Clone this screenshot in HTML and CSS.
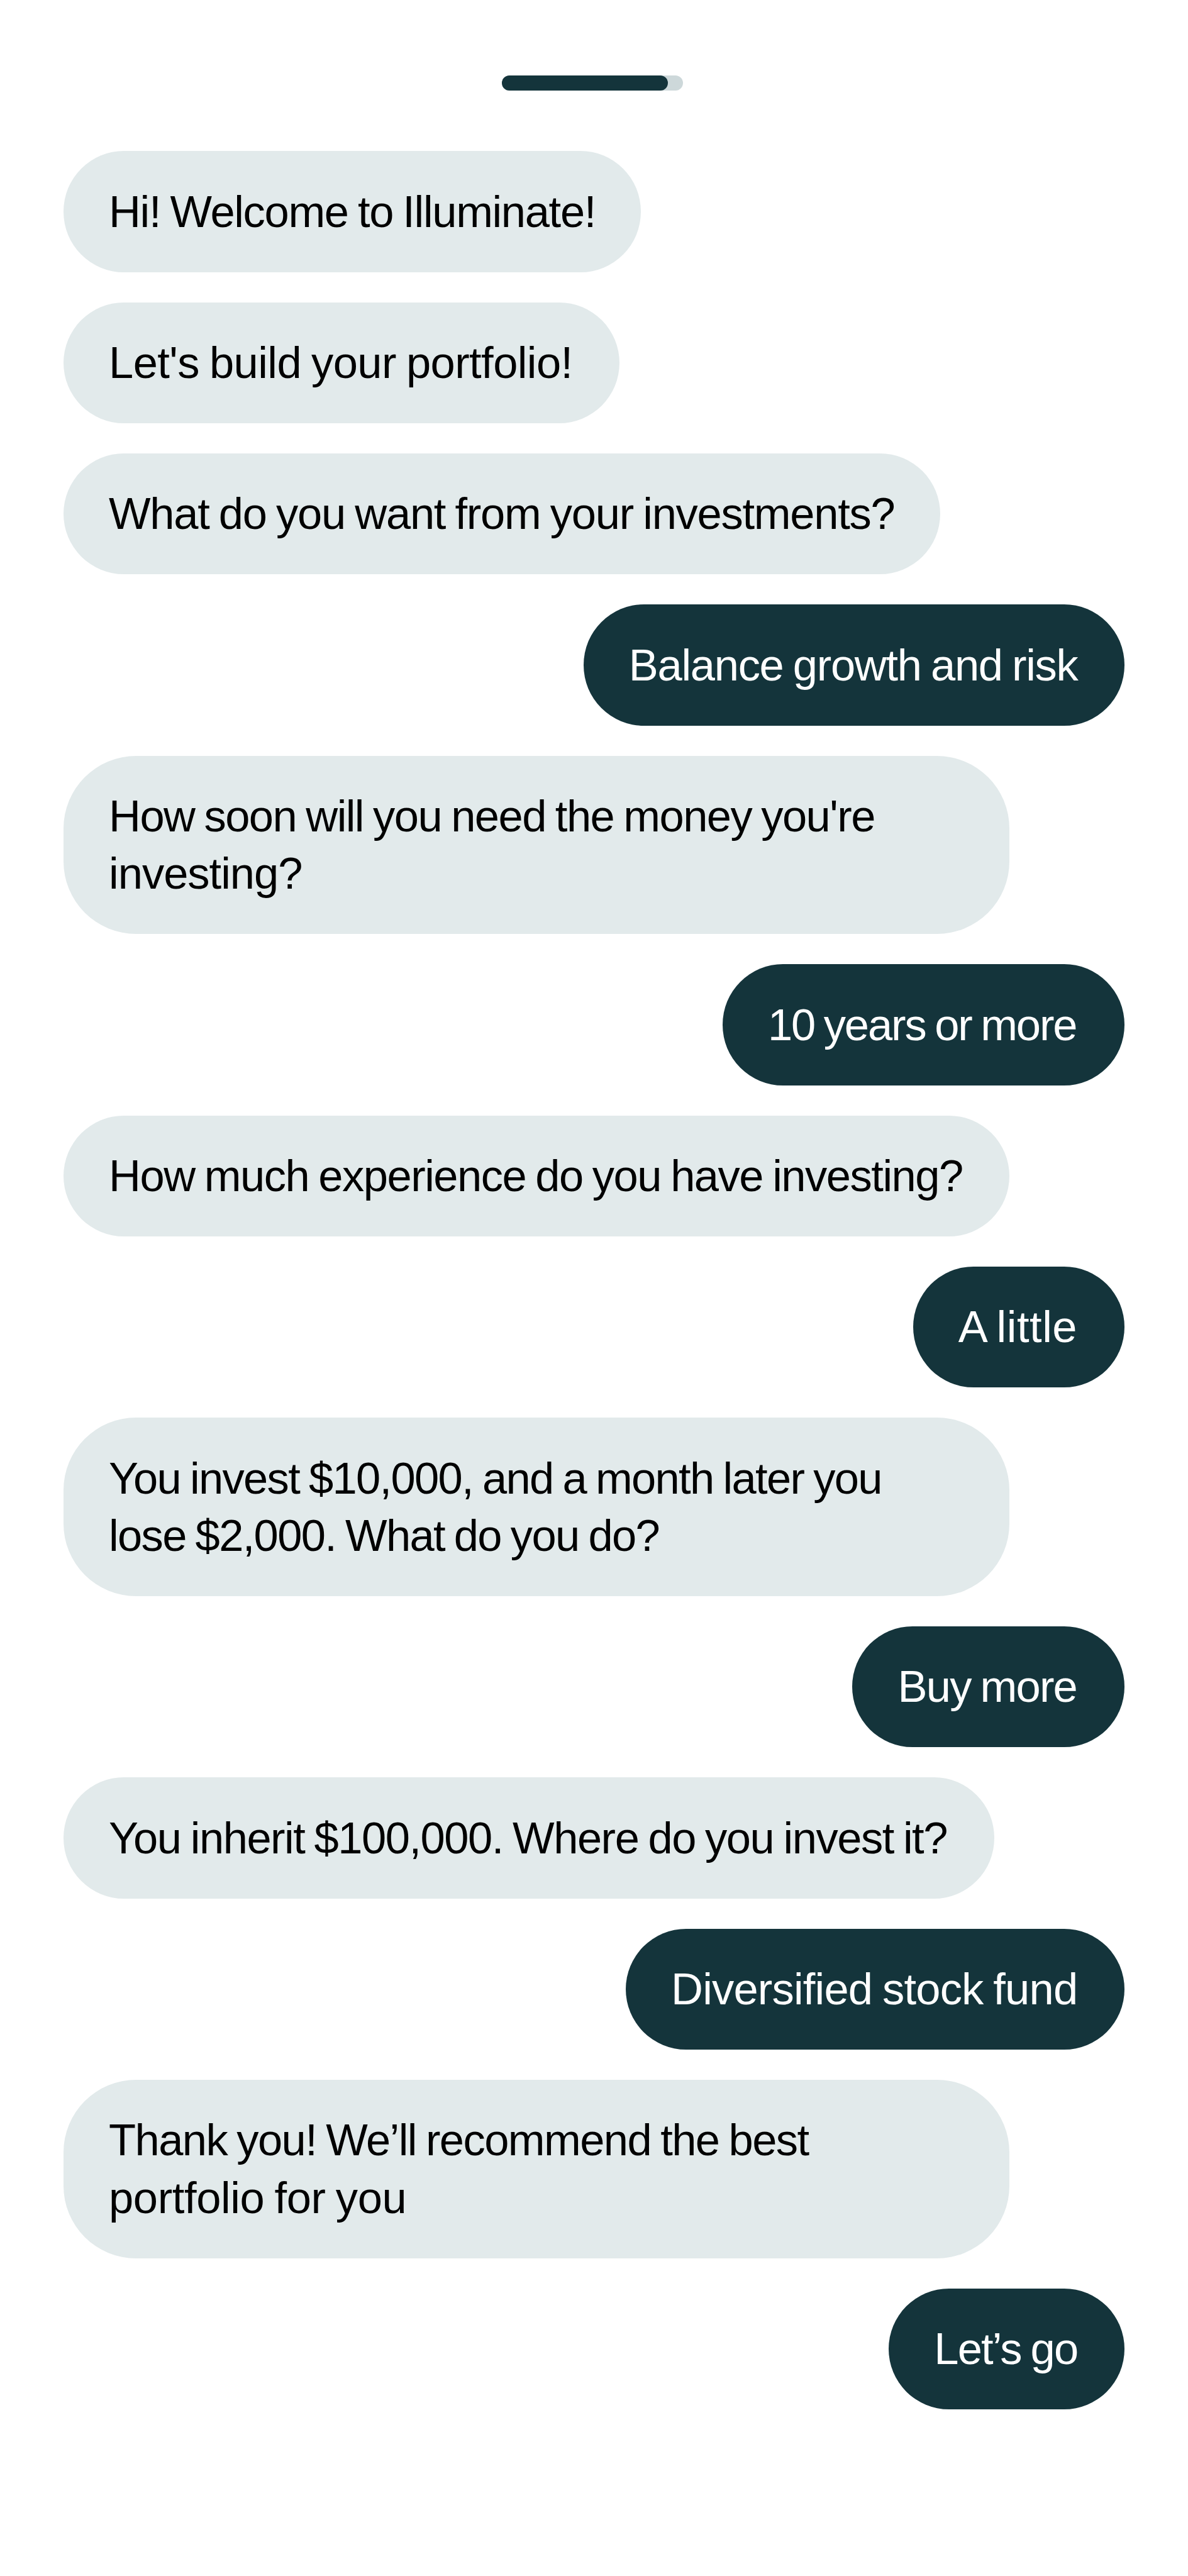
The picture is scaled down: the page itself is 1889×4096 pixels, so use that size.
FILE: index.html
```html
<!DOCTYPE html>
<html lang="en">
<head>
  <meta charset="UTF-8" />
  <meta name="viewport" content="width=device-width, initial-scale=1.0"/>
  <title>Illuminate</title>
  <link rel="stylesheet" href="styles.css">
</head>
<body>
  <div class="progress">
    <div class="progress-fill"></div>
  </div>

  <main class="chat">
    <div class="bubble welcome">Hi! Welcome to Illuminate!</div>
    <div class="bubble build">Let's build your portfolio!</div>
    <div class="bubble goal">What do you want from your investments?</div>
    <div class="bubble reply balance">Balance growth and risk</div>

    <div class="bubble tall soon">
      <span>How soon will you need the money you're</span>
      <span class="soon-end">investing?</span>
    </div>
    <div class="bubble reply years">10 years or more</div>

    <div class="bubble experience">How much experience do you have investing?</div>
    <div class="bubble reply little">A little</div>

    <div class="bubble tall loss">
      <span>You invest $10,000, and a month later you</span>
      <span>lose $2,000. What do you do?</span>
    </div>
    <div class="bubble reply buy">Buy more</div>

    <div class="bubble inherit">You inherit $100,000. Where do you invest it?</div>
    <div class="bubble reply fund">Diversified stock fund</div>

    <div class="bubble tall thanks">
      <span>Thank you! We’ll recommend the best</span>
      <span class="thanks-end">portfolio for you</span>
    </div>
    <div class="bubble reply go">Let’s go</div>
  </main>
</body>
</html>
```
FILE: styles.css
```css
* { box-sizing: border-box; margin: 0; padding: 0; }

/* 1rem = 10 units of a 393 wide phone screen */
html {
  font-size: calc(100vw / 39.3);
}

body {
  min-height: 100vh;
  padding: 2.5rem 2.1rem 0;
  background: #fff;
  font-family: "Liberation Sans", Arial, sans-serif;
  color: #000;
}

.progress {
  width: 6rem;
  height: 0.5rem;
  margin: 0 0 2rem 14.5rem;
  border-radius: 0.25rem;
  background: #cdd8da;
}

.progress-fill {
  width: 5.5rem;
  height: 100%;
  border-radius: 0.25rem;
  background: #14343b;
}

.chat {
  display: flex;
  flex-direction: column;
  align-items: flex-start;
  gap: 1rem;
}

.bubble {
  padding: 1.05rem 0 1.05rem 1.5rem;
  border-radius: 2rem;
  background: #e2eaeb;
  font-size: 1.467rem;
  line-height: 1.9rem;
  word-spacing: -3px;
  white-space: nowrap;
}

.bubble span { display: block; }

.tall {
  width: 31.3rem;
  border-radius: 2.4rem;
}

.reply {
  align-self: flex-end;
  background: #14343b;
  color: #fff;
}

/* width and tracking of each message */
.welcome { width: 19.1rem; letter-spacing: -1.33px; }
.build { width: 18.4rem; letter-spacing: -0.57px; }
.goal { width: 29rem; letter-spacing: -1.26px; }
.balance { width: 17.9rem; letter-spacing: -1.29px; }
.soon { letter-spacing: -1.54px; }
.soon-end { letter-spacing: -1px; }
.years { width: 13.3rem; letter-spacing: -2.08px; }
.experience { width: 31.3rem; letter-spacing: -1.49px; }
.little { width: 7rem; letter-spacing: 0.54px; }
.loss { letter-spacing: -1.67px; }
.buy { width: 9rem; letter-spacing: -1.78px; }
.inherit { width: 30.8rem; letter-spacing: -1.47px; }
.fund { width: 16.5rem; letter-spacing: -0.81px; }
.thanks { letter-spacing: -1.56px; }
.thanks-end { letter-spacing: -0.39px; }
.go { width: 7.8rem; letter-spacing: -1.82px; }
```
